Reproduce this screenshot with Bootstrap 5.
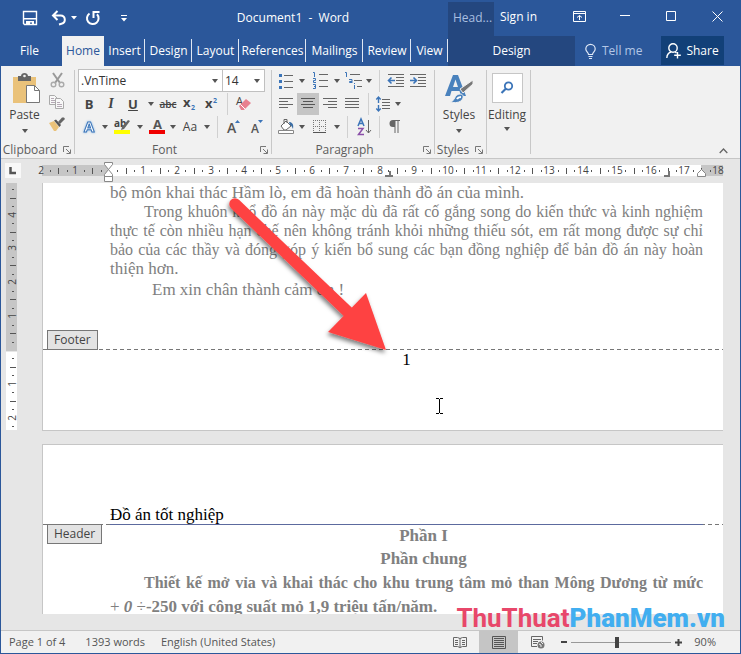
<!DOCTYPE html>
<html lang="en">
<head>
<meta charset="utf-8">
<meta name="viewport" content="width=device-width, initial-scale=1">
<title>Document1 - Word</title>
<link href="https://cdn.jsdelivr.net/npm/bootstrap@5.3.0/dist/css/bootstrap.min.css" rel="stylesheet">
<style>
:root{--blue:#2b579a;--dark:#24477f;--ink:#444;--line:#c8c8c8}
body{font-family:"Open Sans","Noto Sans",sans-serif;font-size:12px;line-height:16px;color:var(--ink);background:#e6e6e6}
button{font:inherit;color:inherit;background:none;border:0;padding:0}
svg{display:block;flex:none;overflow:visible}
.window{min-height:100vh;border:1px solid var(--blue);border-top:0}
.titlebar{background:var(--blue);color:#fff;height:36px}
.quick{width:133px;padding-left:20px}
.wbtn{width:46px;height:32px}
.context-name{background:var(--dark);color:#a9bfe0;width:46px;margin-top:2px;height:34px;padding-left:5px;padding-bottom:2px}
.signin{width:62px;height:34px;padding-left:6px;text-align:left}
.tabs{background:var(--blue);color:#fff;height:30px;display:grid;grid-template-columns:61px 42px 41px 47px 47px 67px 57px 48px 37px 127px 1fr 63px 16px}
.tabs a{color:#fff;text-decoration:none;display:flex;align-items:center;justify-content:center;position:relative}
.tabs a.sep::after{content:"";position:absolute;right:0;top:3px;bottom:4px;border-right:1px solid #dfe7f3}
.tabs a.current{background:#f1f1f1;color:var(--blue)}
.tabs a.context-tab{background:var(--dark)}
.tellme{color:#b3c7e6;gap:6px;padding-left:10px}
.share{background:#124078;height:29px;gap:4px}
.ribbon{background:#f1f1f1;height:93px;border-bottom:1px solid #c6c6c6}
.rgroup{display:flex;flex-direction:column;position:relative;padding-top:3px}
.rgroup::after{content:"";position:absolute;right:0;top:4px;bottom:4px;border-right:1px solid var(--line)}
.rgroup footer{height:17px;margin-top:auto;display:flex;align-items:center;color:#5d5d5d;position:relative;justify-content:center;padding-right:16px}
.gfont footer,.gpara footer{padding-right:18px}
.rgroup footer button{position:absolute;right:4px;top:5px}
.gfont{width:197px}.gpara{width:163px}.gclip{width:74px}.gstyle{width:52px}.gedit{width:44px}
.trow{height:23px;display:flex;align-items:center;padding-left:3px}
.t8,.t10,.t12,.t14,.t20,.t22,.t24,.t26{height:22px;display:flex;align-items:center;justify-content:center}
.t8{width:8px}.t10{width:10px}.t12{width:12px}.t14{width:14px}.t20{width:20px}.t22{width:22px}.t24{width:24px}.t26{width:26px}
.vs::before{content:"";height:22px;border-left:1px solid #d0d0d0}
.on{background:#c5c5c5}
.glyph{font-weight:700;font-size:13px}
.serif-i{font-family:"Liberation Serif",serif;font-size:14px}
.combo{height:23px;border:1px solid #c0c0c0;border-radius:0;padding:0 16px 0 2px;font-size:12px;line-height:16px;color:#333;background-color:#fff;background-size:6px 4px;background-position:right 4px center;
--bs-form-select-bg-img:url("data:image/svg+xml,%3csvg xmlns='http://www.w3.org/2000/svg' viewBox='0 0 6 4'%3e%3cpath fill='%23555' d='M0 0h6L3 4z'/%3e%3c/svg%3e")}
.cname{width:145px}.csize{width:43px;margin-left:-1px}
.search{width:31px;height:30px;background:#fff;border:1px solid #c6c6c6}
.gap-lbl{gap:2px}
.under{margin-top:4px}
.ruler-row{height:24px}
.tabsel{width:16px;height:15px;background:#f8f8f8;margin-left:4px}
.side{flex:0 0 41px;padding-left:5px}
.pages{margin-right:17px;position:relative;min-width:0}
.sheet{background:#fff;border-left:1px solid #c6c6c6;font-family:"Liberation Serif","Times New Roman",serif;font-size:17px;line-height:19px;color:#808080;position:relative}
.sheet1{height:248px;border-bottom:1px solid #c6c6c6}
.sheet2{height:170px;border-top:1px solid #c6c6c6;margin-top:13px;overflow:hidden}
.copy{margin:0 20px 0 67px}
.copy p{margin:0}
.full{display:block;text-align:justify;text-align-last:justify;white-space:nowrap}
.copy .full{font-size:16px}
.ind{padding-left:34px}
.lastline{padding-top:2px}
.dashes{height:1px;background:repeating-linear-gradient(90deg,#777 0 4px,transparent 4px 7px)}
.chip{position:absolute;left:4px;height:20px;padding:0 6px;border:1px solid #777;background:#e3e3e3;color:#444;font:12px/18px "Open Sans","Noto Sans",sans-serif}
.chip-f{top:147px}.chip-h{top:79px}
.foot{margin-top:50px}
.black{color:#000}
.headtext{padding-top:60px}
.rule{height:1px;background:#5c6a9e;margin:0 20px 0 67px}
.bodytext{font-weight:700;line-height:24px}
.bodytext p:first-child{line-height:22px}
.overlay{position:absolute;left:0;top:0;pointer-events:none}
.brand{position:absolute;right:-2px;bottom:-4px;font:700 26px/32px Roboto,"Liberation Sans",sans-serif;color:#e8476a;white-space:nowrap}
.brand b{color:#41aef0}
.status{background:#f1f1f1;height:23px;border-top:1px solid #c6c6c6;color:#555;font-size:11px}
.vbtn{width:39px;height:22px}
.zoomer{width:100px;height:11px;appearance:none;background:linear-gradient(#999,#999) center/100% 1px no-repeat;margin:0}
.zoomer::-webkit-slider-runnable-track{height:11px;background:none}
.zoomer::-webkit-slider-thumb{appearance:none;width:4px;height:11px;background:#444}
.tiny{font-size:10px}
.glow{filter:drop-shadow(0 0 1px #7fb2e5)}
</style>
<script src="https://cdn.jsdelivr.net/npm/bootstrap@5.3.0/dist/js/bootstrap.bundle.min.js"></script>
</head>
<body>
<svg class="d-none" aria-hidden="true">
 <symbol id="car" viewBox="0 0 6 4"><path fill="#555" d="M0 0h6L3 4z"/></symbol>
 <symbol id="launch" viewBox="0 0 8 8"><path d="M.5 6V.5H6M3 3l4 4M7.500 3.500v4h-4" fill="none" stroke="#777"/></symbol>
</svg>
<div class="window d-flex flex-column">
<header>
 <div class="titlebar d-flex">
  <div class="quick d-flex align-items-center">
   <button aria-label="Save"><svg width="18" height="16" viewBox="0 0 18 16"><path d="M2.500 1.500h13v13h-12l-1-1z" fill="none" stroke="#fff" stroke-width="1.400"/><path d="M3 8h12v1.500H3zM5 11h8v4h-2v-2.500H9V15H5z" fill="#fff"/></svg></button>
   <button class="ms-2 ps-1" aria-label="Undo"><svg width="16" height="16" viewBox="0 0 16 16"><path d="M2 5.500h7.500a4.200 4.200 0 0 1 1 8.300L8 14.500M6.500 1L2 5.500 6.500 10" fill="none" stroke="#fff" stroke-width="2"/></svg></button>
   <button class="ms-1" aria-label="Undo list"><svg width="6" height="4"><path fill="#fff" d="M0 0h6L3 3.500z"/></svg></button>
   <button class="ms-2" aria-label="Redo"><svg width="16" height="16" viewBox="0 0 16 16"><path d="M4.500 3.500a5.800 5.800 0 1 0 7.500.8M8.500 8V2h6" fill="none" stroke="#fff" stroke-width="2"/></svg></button>
   <button class="ms-3 ps-1" aria-label="Customize"><svg width="6" height="7"><path fill="#fff" d="M0 0h6v1H0zM0 3h6L3 6.500z"/></svg></button>
  </div>
  <div class="flex-grow-1 text-center align-self-center ps-1">Document1&nbsp; -&nbsp; Word</div>
  <div class="context-name d-flex align-items-center">Head...</div>
  <button class="signin">Sign in</button>
  <button class="wbtn d-flex align-items-center justify-content-center" aria-label="Ribbon display"><svg width="13" height="11"><path d="M.5.500h12v10H.5zM.5 2.500h12M6.500 9V4.500M4 6.500l2.500-2 2.500 2" fill="none" stroke="#fff"/></svg></button>
  <button class="wbtn d-flex align-items-center justify-content-center" aria-label="Minimize"><svg width="10" height="2"><path fill="#fff" d="M0 0h10v1H0z"/></svg></button>
  <button class="wbtn d-flex align-items-center justify-content-center" aria-label="Maximize"><svg width="10" height="10"><path fill="none" stroke="#fff" d="M.5.500h9v9h-9z"/></svg></button>
  <button class="wbtn d-flex align-items-center justify-content-center" aria-label="Close"><svg width="11" height="11"><path stroke="#fff" d="M.5.500l10 10M10.500.500l-10 10"/></svg></button>
 </div>
 <nav class="tabs">
  <a href="#" class="pe-1">File</a><a href="#" class="current">Home</a><a href="#" class="sep">Insert</a><a href="#" class="sep">Design</a><a href="#" class="sep">Layout</a><a href="#" class="sep">References</a><a href="#" class="sep">Mailings</a><a href="#" class="sep">Review</a><a href="#" class="sep">View</a><a href="#" class="context-tab">Design</a>
  <button class="tellme d-flex align-items-center"><svg width="11" height="15" viewBox="0 0 11 15"><path d="M3.500 10.500c0-2-2.700-2.800-2.700-5.500a4.700 4.700 0 0 1 9.400 0c0 2.700-2.700 3.500-2.700 5.500zM3.500 12.500h4M4 14.500h3" fill="none" stroke="#dfe8f6" stroke-width="1.200"/></svg>Tell me</button>
  <button class="share d-flex align-items-center justify-content-center"><svg width="16" height="16" viewBox="0 0 16 16"><circle cx="7" cy="5" r="4.200" fill="none" stroke="#fff" stroke-width="1.400"/><path d="M.8 15c.2-3.500 2-5.500 4.500-6M9 9l1.500 1M11.500 9v6.500M8.200 12.300h6.600" fill="none" stroke="#fff" stroke-width="1.400"/></svg>Share</button>
 </nav>
</header>
<section class="ribbon d-flex" aria-label="Ribbon">
 <div class="rgroup gclip">
  <div class="d-flex">
   <button class="d-flex flex-column align-items-center gap-lbl ms-1 ps-1 pe-1 pt-1"><svg width="31" height="32" viewBox="0 0 31 32"><path d="M4 4h23v26H4z" fill="#eac27a"/><path d="M9 3h3c0-4 7-4 7 0h3v5H9z" fill="#666"/><circle cx="15.500" cy="3" r="1.300" fill="#f1f1f1"/><path d="M17.500 12.500h8l5 5v12h-13z" fill="#fff" stroke="#777"/><path d="M25.500 12.500v5h5" fill="none" stroke="#777"/></svg><span>Paste</span><svg class="under" width="6" height="4"><use href="#car"/></svg></button>
   <div class="d-flex flex-column">
    <button class="t26" aria-label="Cut"><svg width="15" height="16" viewBox="0 0 15 16"><path d="M3 1l7 10M12 1L5 11" stroke="#999" stroke-width="2"/><circle cx="3.500" cy="12.500" r="2.300" fill="none" stroke="#aaa" stroke-width="1.400"/><circle cx="11.500" cy="12.500" r="2.300" fill="none" stroke="#aaa" stroke-width="1.400"/></svg></button>
    <button class="t26" aria-label="Copy"><svg width="16" height="14" viewBox="0 0 16 14"><path d="M.5.500h5l3 3v6h-8z" fill="#f8f8f8" stroke="#aaa"/><path d="M6.500 3.500h5l3 3v7h-8z" fill="#f8f8f8" stroke="#aaa"/><path d="M2 3.500h3M2 5.500h4M2 7.500h4M8 7.500h3M8 9.500h5M8 11.500h5" stroke="#b5a9b5"/></svg></button>
    <button class="t26" aria-label="Format painter"><svg width="16" height="14" viewBox="0 0 16 14"><path d="M0 6l5-2 5 6-3 4H5z" fill="#eac27a"/><path d="M5 3.500l2-1 5 5.500-1.500 2z" fill="#555"/><path d="M9 5l4-4.500h2L16 2l-5 5z" fill="#666"/></svg></button>
   </div>
  </div>
  <footer>Clipboard<button aria-label="Clipboard settings"><svg width="8" height="8"><use href="#launch"/></svg></button></footer>
 </div>
 <div class="rgroup gfont">
  <div class="trow"><select class="form-select combo cname" aria-label="Font"><option>.VnTime</option></select><select class="form-select combo csize" aria-label="Font size"><option>14</option></select></div>
  <div class="trow">
   <button class="t22 glyph">B</button><button class="t22 glyph fst-italic serif-i">I</button><button class="t22 glyph text-decoration-underline">U</button><button class="t14" aria-label="Underline styles"><svg width="6" height="4"><use href="#car"/></svg></button><button class="t20 fw-semibold text-decoration-line-through tiny">abc</button><button class="t24" aria-label="Subscript"><svg width="16" height="16"><text x="1" y="11" font-size="13" font-weight="700" fill="#444">x</text><text x="9" y="14" font-size="7" font-weight="700" fill="#3b74b8">2</text></svg></button><button class="t20" aria-label="Superscript"><svg width="16" height="16"><text x="1" y="12" font-size="13" font-weight="700" fill="#444">x</text><text x="9" y="7" font-size="7" font-weight="700" fill="#3b74b8">2</text></svg></button><span class="t10 vs"></span>
   <button class="t22" aria-label="Clear formatting"><svg width="15" height="15" viewBox="0 0 15 15"><text x="0" y="9" font-size="11" fill="#444">A</text><path d="M3 10l7-7 5 4-7 7H5z" fill="#e8808f"/><path d="M4.500 8.500l5 5" stroke="#fff"/></svg></button>
  </div>
  <div class="trow">
   <button class="t22" aria-label="Text effects"><svg width="14" height="16"><text class="glow" x="2" y="13" font-size="15" font-weight="700" fill="#fff" stroke="#3b74b8" stroke-width="1">A</text></svg></button><button class="t10" aria-label="Text effect list"><svg width="6" height="4"><use href="#car"/></svg></button>
   <button class="t24" aria-label="Highlight"><svg width="17" height="17" viewBox="0 0 17 17"><text x="0" y="9" font-size="10" font-weight="700" fill="#444">ab</text><path d="M7 12l1-3 6-7 2 1-6 8z" fill="#666"/><path fill="#ff0" d="M0 12h16v4H0z"/></svg></button><button class="t12" aria-label="Highlight colours"><svg width="6" height="4"><use href="#car"/></svg></button>
   <button class="t22" aria-label="Font colour"><svg width="16" height="17"><text x="4" y="11" font-size="13" font-weight="700" fill="#555">A</text><path fill="#f00000" d="M0 12h16v4H0z"/></svg></button><button class="t10" aria-label="Font colours"><svg width="6" height="4"><use href="#car"/></svg></button>
   <button class="t24">Aa</button><button class="t10" aria-label="Case list"><svg width="6" height="4"><use href="#car"/></svg></button><span class="t10 vs"></span>
   <button class="t22" aria-label="Grow font"><svg width="14" height="16"><text x="1" y="14" font-size="14" font-weight="600" fill="#555">A</text><path fill="#3b74b8" d="M9 4h5l-2.500-3z"/></svg></button><button class="t24" aria-label="Shrink font"><svg width="14" height="16"><text x="2" y="14" font-size="12" font-weight="600" fill="#555">A</text><path fill="#3b74b8" d="M9 1h5l-2.500 3z"/></svg></button>
  </div>
  <footer>Font<button aria-label="Font settings"><svg width="8" height="8"><use href="#launch"/></svg></button></footer>
 </div>
 <div class="rgroup gpara">
  <div class="trow">
   <button class="t22" aria-label="Bullets"><svg width="14" height="16"><path fill="#3b74b8" d="M0 1h3v3H0zM0 7h3v3H0zM0 13h3v3H0z"/><path stroke="#666" d="M5 2.500h9M5 8.500h9M5 14.500h9"/></svg></button><button class="t10" aria-label="Bullet list"><svg width="6" height="4"><use href="#car"/></svg></button>
   <button class="t26" aria-label="Numbering"><svg width="15" height="17"><g fill="none" stroke="#3b74b8"><path d="M0 .5h1.500V5M0 6.500h2.500v2h-2v2H3M0 12.500h2.500v4H0M1 14.500h2"/></g><path stroke="#666" d="M6 2.500h9M6 8.500h9M6 14.500h9"/></svg></button><button class="t8" aria-label="Number list"><svg width="6" height="4"><use href="#car"/></svg></button>
   <button class="t24" aria-label="Multilevel list"><svg width="17" height="17"><g fill="none" stroke="#3b74b8"><path d="M0 .5h1.500V5M4 7.500h3v3.500M7 9.500H4.500v1H7M9.500 13v4M9.500 11v1"/></g><path stroke="#666" d="M5 2.500h10M9 8.500h8M12 14.500h5"/></svg></button><button class="t8" aria-label="Level list"><svg width="6" height="4"><use href="#car"/></svg></button><span class="t12 vs"></span>
   <button class="t22" aria-label="Decrease indent"><svg width="16" height="13"><path stroke="#666" d="M0 .5h16M8 3.500h8M8 6.500h8M8 9.500h8M0 12.500h16"/><path stroke="#3b74b8" stroke-width="1.600" fill="none" d="M7 6.500H1M3.500 3.500l-3 3 3 3"/></svg></button><button class="t22" aria-label="Increase indent"><svg width="16" height="13"><path stroke="#666" d="M0 .5h16M8 3.500h8M8 6.500h8M8 9.500h8M0 12.500h16"/><path stroke="#3b74b8" stroke-width="1.600" fill="none" d="M0 6.500h6M3.500 3.500l3 3-3 3"/></svg></button>
  </div>
  <div class="trow">
   <button class="t22" aria-label="Align left"><svg width="14" height="12"><path stroke="#666" d="M0 .5h14M0 3.500h9M0 6.500h14M0 9.500h9"/></svg></button><button class="t22 on" aria-label="Center"><svg width="14" height="12"><path stroke="#555" d="M0 .5h14M2 3.500h10M0 6.500h14M2 9.500h10"/></svg></button><button class="t22" aria-label="Align right"><svg width="14" height="12"><path stroke="#666" d="M0 .5h14M5 3.500h9M0 6.500h14M5 9.500h9"/></svg></button><button class="t22" aria-label="Justify"><svg width="14" height="12"><path stroke="#666" d="M0 .5h14M0 3.500h14M0 6.500h14M0 9.500h14"/></svg></button><span class="t10 vs"></span>
   <button class="t20" aria-label="Line spacing"><svg width="14" height="16"><path stroke="#666" d="M6 3.500h8M6 6.500h8M6 9.500h8M6 12.500h8"/><path stroke="#3b74b8" stroke-width="1.400" fill="none" d="M2.500 1v6M2.500 9v6M.3 3.500l2.200-2.500 2.200 2.500M.3 12.500l2.200 2.500 2.200-2.500"/></svg></button><button class="t10" aria-label="Spacing list"><svg width="6" height="4"><use href="#car"/></svg></button>
  </div>
  <div class="trow">
   <button class="t22" aria-label="Shading"><svg width="17" height="17" viewBox="0 0 17 17"><path d="M3 8l5-5 5 5-5 4H6z" fill="#fff" stroke="#666"/><path d="M6 6V1.500h3V5" fill="none" stroke="#666"/><path d="M11 4c3 0 5 2 4 7-1-2-1-3-3-4z" fill="#3b6ea5"/><path d="M.5 12.500h15v3H.5z" fill="#fff" stroke="#888"/></svg></button><button class="t10" aria-label="Shading colours"><svg width="6" height="4"><use href="#car"/></svg></button>
   <button class="t26" aria-label="Borders"><svg width="14" height="14"><path stroke="#777" stroke-dasharray="1 1" fill="none" d="M.5 0v13M6.500 0v13M12.500 0v13M0 .5h13M0 6.500h13"/><path stroke="#555" d="M0 12.500h13"/></svg></button><button class="t8" aria-label="Border list"><svg width="6" height="4"><use href="#car"/></svg></button><span class="t12 vs"></span>
   <button class="t22" aria-label="Sort"><svg width="15" height="18"><path fill="none" stroke="#3b74b8" stroke-width="1.500" d="M1 8l3-7 3 7M2 5.500h4"/><path fill="none" stroke="#8a4fa8" stroke-width="1.500" d="M1 10.500h5L1.500 16.500H7"/><path stroke="#666" fill="none" d="M11.500 2v13M9 12l2.500 3 2.500-3"/></svg></button><span class="t8 vs"></span>
   <button class="t22" aria-label="Paragraph marks"><svg width="11" height="13"><path fill="#666" d="M4 7a3.500 3.500 0 0 1 0-7h7v1H9.500v12h-1V1h-2v12h-1V7z"/></svg></button>
  </div>
  <footer>Paragraph<button aria-label="Paragraph settings"><svg width="8" height="8"><use href="#launch"/></svg></button></footer>
 </div>
 <div class="rgroup gstyle">
  <button class="d-flex flex-column align-items-center gap-lbl pt-1 pe-1"><svg width="29" height="32" viewBox="0 0 29 32"><path d="M0 23L8 2h5l8 21h-5l-1.500-5H6.500L5 23zM8 14h5l-2.500-7.500z" fill="#4a82bd"/><path d="M15 16l3 4 10-9V7z" fill="#777" stroke="#f1f1f1"/><path d="M5 29c5 0 4-8 10-8 4 0 4 4 1 7-3 2-8 2-11 1z" fill="#4a82bd" stroke="#f1f1f1"/><path d="M12 26c1-2 2-2 4-2" stroke="#fff" stroke-width="2" fill="none"/></svg><span>Styles</span><svg class="under" width="6" height="4"><use href="#car"/></svg></button>
  <footer>Styles<button aria-label="Style settings"><svg width="8" height="8"><use href="#launch"/></svg></button></footer>
 </div>
 <div class="rgroup gedit">
  <button class="d-flex flex-column align-items-center pe-1"><span class="search d-flex align-items-center justify-content-center mt-1"><svg width="14" height="14"><circle cx="8.500" cy="5" r="3.700" fill="none" stroke="#3b74b8" stroke-width="1.800"/><path d="M6 7.500L1.500 12" stroke="#3b74b8" stroke-width="2.200"/></svg></span><span class="pt-1">Editing</span><svg class="under" width="6" height="4"><use href="#car"/></svg></button>
 </div>
 <button class="ms-auto me-2 align-self-end" aria-label="Collapse ribbon"><svg class="me-1 mb-1" width="9" height="6"><path d="M.7 5l3.800-4 3.800 4" fill="none" stroke="#666" stroke-width="1.300"/></svg></button>
</section>
<main class="flex-grow-1 d-flex flex-column">
 <div class="ruler-row d-flex">
  <div class="side ps-0 pt-1"><div class="tabsel d-flex align-items-center justify-content-center"><svg width="8" height="8"><path d="M1.500 0v6H7" fill="none" stroke="#555" stroke-width="2.500"/></svg></div></div>
  <svg id="hr" width="681" height="24"></svg>
 </div>
 <div class="d-flex flex-grow-1">
  <div class="side"><svg id="vr" width="12" height="247"></svg></div>
  <div class="pages flex-grow-1">
   <article class="sheet sheet1">
    <div class="copy">
     <p>bộ môn khai thác Hầm lò, em đã hoàn thành đồ án của mình.</p>
     <p><span class="full ind">Trong khuôn khổ đồ án này mặc dù đã rất cố gắng song do kiến thức và kinh nghiệm</span><span class="full">thực tế còn nhiều hạn chế nên không tránh khỏi những thiếu sót, em rất mong được sự chỉ</span><span class="full">bảo của các thầy và đóng góp ý kiến bổ sung các bạn đồng nghiệp để bản đồ án này hoàn</span>thiện hơn.</p>
     <p class="ind lastline"><span class="ps-2">Em xin chân thành cảm ơn !</span></p>
    </div>
    <div class="foot"><div class="dashes"></div><div class="copy text-center black">1</div></div>
    <div class="chip chip-f">Footer</div>
   </article>
   <article class="sheet sheet2">
    <div class="copy black headtext">Đồ án tốt nghiệp</div>
    <div class="dashes"><div class="rule"></div></div>
    <div class="copy bodytext"><p class="ind text-center">Phần I</p><p class="ind text-center">Phần chung</p><p class="full ind">Thiết kế mở vỉa và khai thác cho khu trung tâm mỏ than Mông Dương từ mức</p><p><span class="fw-normal">+ </span><i>0</i><span class="fw-normal"> ÷</span>-250 với công suất mỏ 1,9 triệu tấn/năm.</p></div>
    <div class="chip chip-h">Header</div>
   </article>
   <svg class="overlay" width="420" height="240" viewBox="42 183 420 240">
    <defs><filter id="sh" x="-20%" y="-20%" width="140%" height="140%"><feDropShadow dx="-1" dy="3" stdDeviation="2" flood-opacity=".5"/></filter></defs>
    <g filter="url(#sh)" fill="#fe4343"><path d="M235 204L348 312" stroke="#fe4343" stroke-width="11.500" stroke-linecap="round"/><path d="M386 350L366 293 328 332z"/></g>
    <path d="M436 398.500h3M440 398.500h3M439.500 399v14M436 413.500h3M440 413.500h3" stroke="#000" fill="none"/>
   </svg>
   <div class="brand">ThuThuat<b>PhanMem.vn</b></div>
  </div>
 </div>
</main>
<footer class="status d-flex align-items-center">
 <span class="ps-2">Page 1 of 4</span><span class="ps-3 ms-1">1393 words</span><span class="ps-3">English (United States)</span>
 <button class="vbtn ms-auto d-flex align-items-center justify-content-center" aria-label="Read mode"><svg width="14" height="13"><path fill="none" stroke="#666" d="M.5 1.500h4l2.500 1 2.500-1h4v9h-4l-2.500 1-2.500-1h-4zM7 2v10M2 4.500h3M2 6.500h3M2 8.500h3M9 4.500h3M9 6.500h3M9 8.500h3"/></svg></button>
 <button class="vbtn on d-flex align-items-center justify-content-center" aria-label="Print layout"><svg width="14" height="13"><path fill="none" stroke="#555" d="M.5.500h13v12H.5zM2 2.500h10M2 4.500h10M2 6.500h10M2 8.500h10M2 10.500h10"/></svg></button>
 <button class="vbtn d-flex align-items-center justify-content-center" aria-label="Web layout"><svg width="14" height="13"><path fill="none" stroke="#666" d="M6 10.500H.5V.5h11v4M2 3.500h8M2 5.500h5M2 7.500h4"/><circle cx="10" cy="9" r="3.500" fill="#777"/><path d="M8 8l2 1v2M10 6l2 2" stroke="#eee" fill="none"/></svg></button>
 <button class="ms-1" aria-label="Zoom out"><svg width="6" height="2"><path fill="#444" d="M0 0h6v2H0z"/></svg></button>
 <input type="range" class="zoomer mx-1" min="0" max="100" value="45" aria-label="Zoom">
 <button aria-label="Zoom in"><svg width="7" height="7"><path stroke="#444" stroke-width="2" d="M0 3.500h7M3.500 0v7"/></svg></button>
 <span class="ps-2 ms-1 pe-4">90%</span>
</footer>
</div>
<script>
// Ruler marks: one number per centimetre, a tick at each half, dots at the quarters.
const CM=33.85;
function marks(from,to,draw){
  for(let q=from*4;q<=to*4;q++){
    if(q===0) continue;
    draw(Math.round(q/4*CM),q%4===0?'n':q%2===0?'t':'d',Math.abs(q/4));
  }
}
let h='<path fill="#c6c6c6" d="M0 6h66v11H0zM659 6h22v11h-22z"/><path fill="#fff" d="M66 6h593v11H66z"/>';
marks(-2,18,(p,k,n)=>{
  const x=67+p;
  if(k==='n') h+=`<text x="${x}" y="15" text-anchor="middle" font-size="10" fill="#444">${n}</text>`;
  else if(k==='t') h+=`<path d="M${x} 9h1v6h-1z" fill="#555"/>`;
  else h+=`<path d="M${x} 11h1v2h-1z" fill="#555"/>`;
});
h+='<path d="M62.500 3.500h8v2l-4 5-4-5zM66.500 10.500l4 5v2h-8v-2zM62.500 17.500h8v5h-8zM655.500 17.500v-3l4-4 4 4v3z" fill="#fff" stroke="#888"/><path d="M343 16h8v2h-8zM347 12h2v4h-2zM622 16h6v2h-6zM626 12h2v4h-2z" fill="#777"/>';
document.getElementById('hr').innerHTML=h;
let v='<path fill="#c6c6c6" d="M0 0h11v168H0z"/><path fill="#fff" d="M0 169h11v78H0z"/>';
marks(-4.75,2.25,(p,k,n)=>{
  const y=167+p;
  if(k==='n') v+=`<text transform="translate(10 ${y}) rotate(-90)" text-anchor="middle" font-size="10" fill="#444">${n}</text>`;
  else if(k==='t') v+=`<path d="M4 ${y}h6v1H4z" fill="#555"/>`;
  else v+=`<path d="M6 ${y}h2v1H6z" fill="#555"/>`;
});
document.getElementById('vr').innerHTML=v;
</script>
</body>
</html>
